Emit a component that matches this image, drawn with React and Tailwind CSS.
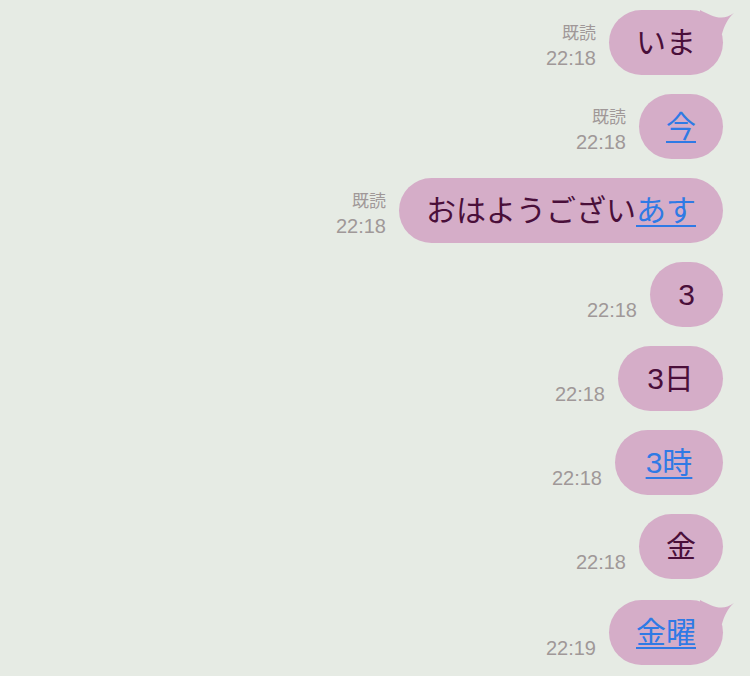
import React from "react";

const messages = [
  { parts: [{ text: "いま" }], read: true, time: "22:18", tail: true },
  { parts: [{ text: "今", link: true }], read: true, time: "22:18" },
  { parts: [{ text: "おはようござい" }, { text: "あす", link: true }], read: true, time: "22:18" },
  { parts: [{ text: "3" }], time: "22:18", width: "w-[73px]" },
  { parts: [{ text: "3日" }], time: "22:18", width: "w-[105px]" },
  { parts: [{ text: "3時", link: true }], time: "22:18", width: "w-[108px]" },
  { parts: [{ text: "金" }], time: "22:18" },
  { parts: [{ text: "金曜", link: true }], time: "22:19", tail: true, extra: "mt-[2px]" },
];

// little horn on the top-right of the first bubble in a group
const Tail = () => (
  <svg className="absolute -top-[2px] -right-[13px]" width="38" height="30" viewBox="0 0 38 30">
    <path d="M2 2 C14 8 24 14 36 5 C30 10 26 18 24 26 L2 26 Z" fill="#d5adc8" />
  </svg>
);

const Row = ({ msg }) => (
  <div className={`flex items-end justify-end gap-[13px] ${msg.extra || ""}`}>
    <div className="mb-[6px] flex flex-col items-end text-[#a09898]">
      {msg.read && <span className="text-[17px] leading-[20px] mb-[3px]">既読</span>}
      <span className="text-[20px] leading-[22px]">{msg.time}</span>
    </div>
    <div
      className={`relative flex h-[65px] items-center justify-center rounded-full bg-[#d5adc8] px-[27px] text-[30px] leading-none text-[#4a0f3a] ${msg.width || ""}`}
    >
      {msg.tail && <Tail />}
      <span className="relative whitespace-nowrap">
        {msg.parts.map((p, i) =>
          p.link ? (
            <span key={i} className="text-[#2f7ae5] underline underline-offset-[4px] decoration-[2px]">
              {p.text}
            </span>
          ) : (
            <span key={i}>{p.text}</span>
          )
        )}
      </span>
    </div>
  </div>
);

export default function App() {
  return (
    <div
      className="min-h-[676px] w-[750px] bg-[#e6ebe4] pt-[10px] pr-[27px]"
      style={{ fontFamily: '"Liberation Sans", "Noto Sans CJK JP", sans-serif' }}
    >
      <div className="flex flex-col gap-[19px]">
        {messages.map((m, i) => (
          <Row key={i} msg={m} />
        ))}
      </div>
    </div>
  );
}
